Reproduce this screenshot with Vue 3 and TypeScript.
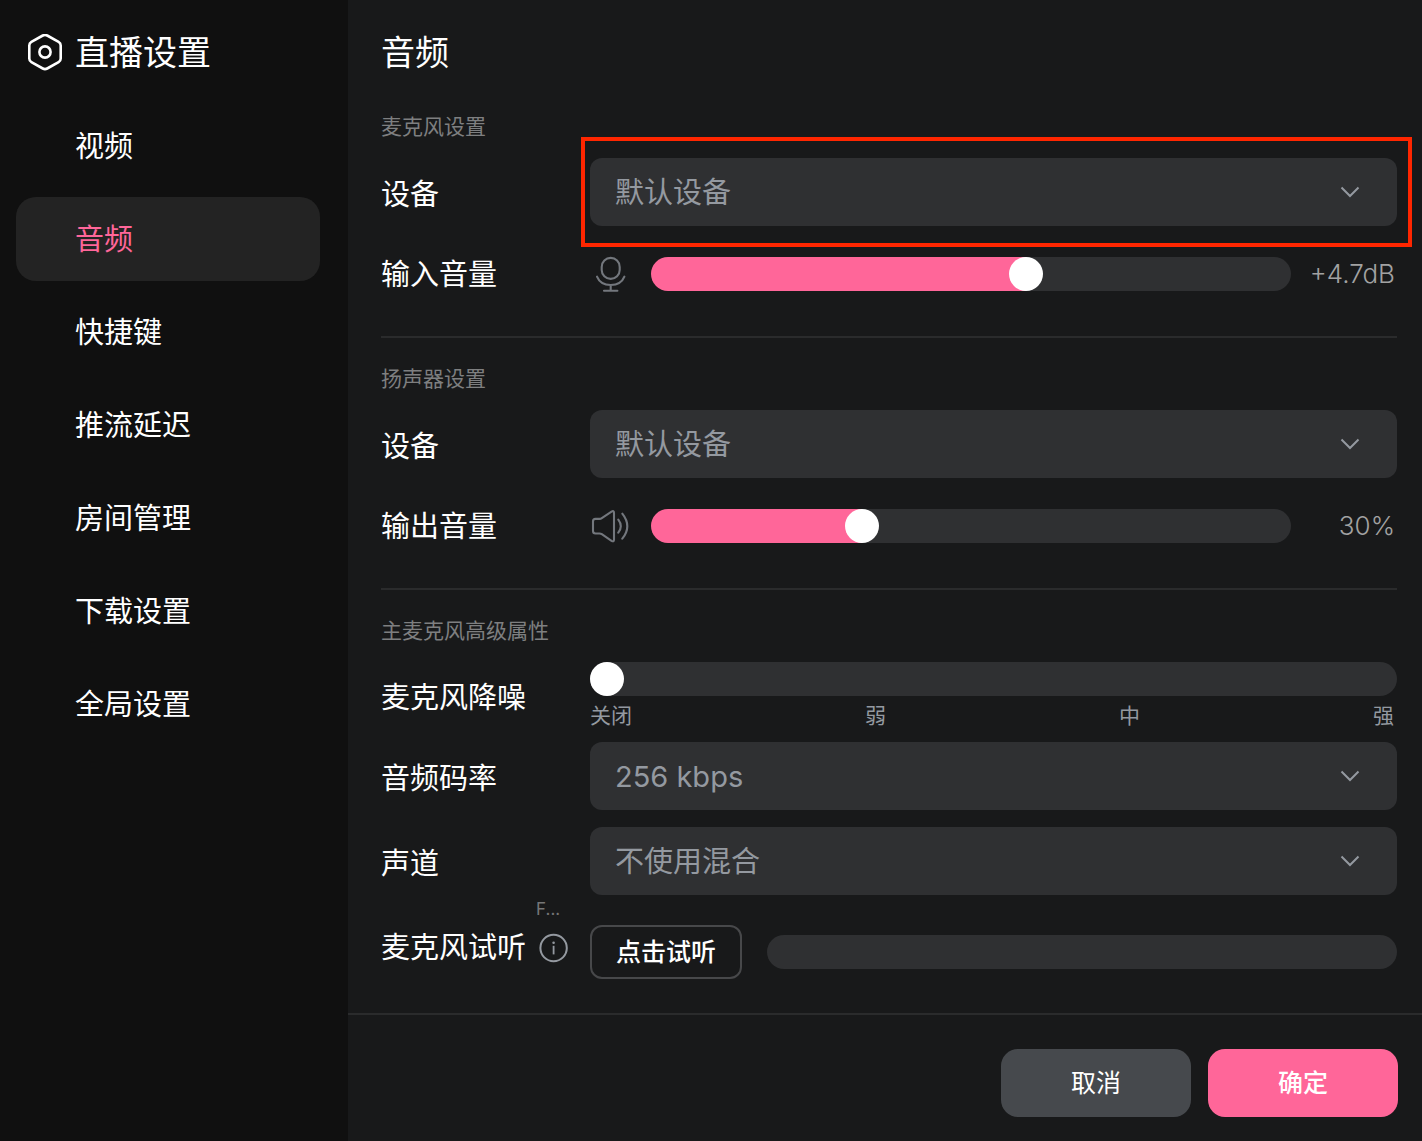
<script setup lang="ts">
import { ref } from 'vue'

interface NavItem {
  id: string
  label: string
}

const navItems: NavItem[] = [
  { id: 'video', label: '视频' },
  { id: 'audio', label: '音频' },
  { id: 'hotkey', label: '快捷键' },
  { id: 'delay', label: '推流延迟' },
  { id: 'room', label: '房间管理' },
  { id: 'download', label: '下载设置' },
  { id: 'global', label: '全局设置' },
]
const noiseLevels: string[] = ['关闭', '弱', '中', '强']

const activeId = ref('audio')
const micVolume = ref(59)
const speakerVolume = ref(32)
const noiseLevel = ref(0)
</script>

<template>
  <div class="window">
    <aside class="sidebar">
      <header class="brand">
        <svg class="brand-icon" viewBox="0 1 36 38" fill="none" stroke="#fff" stroke-width="2.6" aria-hidden="true">
          <path d="M15.8 2.5Q18 1.3 20.2 2.5L31.6 8.8Q33.7 10 33.7 12.4V25.6Q33.7 28 31.6 29.2L20.2 35.5Q18 36.7 15.8 35.5L4.4 29.2Q2.3 28 2.3 25.6V12.4Q2.3 10 4.4 8.8Z" />
          <circle cx="18" cy="19" r="5.6" />
        </svg>
        <span>直播设置</span>
      </header>
      <nav class="nav">
        <button
          v-for="item in navItems"
          :key="item.id"
          type="button"
          class="nav-item"
          :class="{ active: item.id === activeId }"
          @click="activeId = item.id"
        >
          {{ item.label }}
        </button>
      </nav>
    </aside>

    <main class="main">
      <div class="content">
        <h1>音频</h1>

        <section class="section">
          <h2>麦克风设置</h2>
          <div class="row select-row">
            <label for="mic-device">设备</label>
            <div class="select highlighted">
              <select id="mic-device"><option>默认设备</option></select>
              <svg class="chevron" viewBox="0 0 20 12" aria-hidden="true"><path d="M1.5 1.5L10 10L18.5 1.5" /></svg>
            </div>
          </div>
          <div class="row volume-row">
            <label for="mic-volume">输入音量</label>
            <div class="volume">
              <svg class="icon" viewBox="0 0 40 40" aria-hidden="true">
                <rect x="11.7" y="3.9" width="18" height="21" rx="9" />
                <path d="M7 22.7C9 27.7 14 31 20.7 31S32.4 27.7 34.4 22.7M20.7 31V36.7M14 36.7H27.4" />
              </svg>
              <input id="mic-volume" v-model.number="micVolume" class="range" type="range" min="0" max="100" :style="{ '--level': micVolume / 100 }" />
              <output for="mic-volume">+4.7dB</output>
            </div>
          </div>
        </section>

        <section class="section divided">
          <h2>扬声器设置</h2>
          <div class="row select-row">
            <label for="speaker-device">设备</label>
            <div class="select">
              <select id="speaker-device"><option>默认设备</option></select>
              <svg class="chevron" viewBox="0 0 20 12" aria-hidden="true"><path d="M1.5 1.5L10 10L18.5 1.5" /></svg>
            </div>
          </div>
          <div class="row volume-row">
            <label for="speaker-volume">输出音量</label>
            <div class="volume">
              <svg class="icon" viewBox="0 0 40 40" aria-hidden="true">
                <path d="M5.5 12.9H9.5Q10.8 12.9 11.8 12.2L21.5 5.6Q24 4.2 24 6.7V33.7Q24 36.2 21.5 34.8L11.8 28.2Q10.8 27.5 9.500 27.5H5.5Q3 27.5 3 25V15.4Q3 12.9 5.5 12.9Z" />
                <path d="M28.300 13.7Q33.3 20.2 28.3 26.7M32.3 7.700Q42.300 20.2 32.3 32.7" />
              </svg>
              <input id="speaker-volume" v-model.number="speakerVolume" class="range" type="range" min="0" max="100" :style="{ '--level': speakerVolume / 100 }" />
              <output for="speaker-volume">30%</output>
            </div>
          </div>
        </section>

        <section class="section divided">
          <h2>主麦克风高级属性</h2>
          <div class="row noise-row">
            <label for="noise">麦克风降噪</label>
            <div class="noise">
              <input id="noise" v-model.number="noiseLevel" class="range" type="range" min="0" max="3" :style="{ '--level': noiseLevel / 3 }" />
              <div class="ticks">
                <span v-for="level in noiseLevels" :key="level">{{ level }}</span>
              </div>
            </div>
          </div>
          <div class="row select-row bitrate-row">
            <label for="bitrate">音频码率</label>
            <div class="select">
              <select id="bitrate"><option>256 kbps</option></select>
              <svg class="chevron" viewBox="0 0 20 12" aria-hidden="true"><path d="M1.5 1.5L10 10L18.5 1.5" /></svg>
            </div>
          </div>
          <div class="row select-row channel-row">
            <label for="channel">声道</label>
            <div class="select">
              <select id="channel"><option>不使用混合</option></select>
              <svg class="chevron" viewBox="0 0 20 12" aria-hidden="true"><path d="M1.5 1.5L10 10L18.5 1.5" /></svg>
            </div>
          </div>
          <div class="row test-row">
            <div class="test-label">
              <span>麦克风试听</span>
              <span class="info">
                <span class="info-hint">F...</span>
                <svg viewBox="0 0 30 30" aria-hidden="true">
                  <circle cx="14.6" cy="15" r="13.2" fill="none" stroke="#9499a0" stroke-width="2" />
                  <path d="M14.6 12.8V21.4" stroke="#9499a0" stroke-width="1.8" />
                  <circle cx="14.6" cy="9.8" r="1.3" fill="#9499a0" />
                </svg>
              </span>
            </div>
            <div class="test">
              <button type="button" class="test-button">点击试听</button>
              <div class="meter"></div>
            </div>
          </div>
        </section>
      </div>

      <footer class="footer">
        <button type="button" class="action cancel">取消</button>
        <button type="button" class="action confirm">确定</button>
      </footer>
    </main>
  </div>
</template>

<style>
body {
  margin: 0;
  background: #18191a;
}
</style>

<style scoped>
.window {
  display: flex;
  min-height: 100vh;
  color: #fff;
  background: #18191a;
  font-family: Inter, "Noto Sans CJK SC", sans-serif;
  font-size: 29px;
  line-height: 46px;
}

button,
select {
  font: inherit;
  color: inherit;
  border: 0;
  margin: 0;
  cursor: pointer;
}

.sidebar {
  flex: 0 0 348px;
  box-sizing: border-box;
  padding: 29px 28px 0 16px;
  background: #101010;
}

.brand {
  display: flex;
  align-items: center;
  gap: 12px;
  padding-left: 11px;
  font-size: 34px;
  line-height: 48px;
}

.brand-icon {
  width: 36px;
  height: 38px;
}

.nav {
  display: flex;
  flex-direction: column;
  gap: 9px;
  margin-top: 27px;
}

.nav-item {
  height: 84px;
  padding: 2px 0 0 59px;
  border-radius: 20px;
  background: transparent;
  text-align: left;
}

.nav-item.active {
  background: #232323;
  color: #ff6699;
}

.main {
  flex: 1;
  min-width: 0;
  display: flex;
  flex-direction: column;
}

.content {
  padding: 29px 25px 34px 33px;
}

h1 {
  margin: 0 0 34px;
  font-size: 34px;
  line-height: 48px;
  font-weight: 400;
}

h2 {
  margin: 0 0 15px;
  font-size: 21px;
  line-height: 32px;
  font-weight: 400;
  color: #7e7f80;
}

.section.divided {
  margin-top: 45px;
  padding-top: 25px;
  border-top: 2px solid #2a2b2c;
}

.row {
  display: grid;
  grid-template-columns: 209px minmax(0, 1fr);
  align-items: center;
}

.row label {
  padding-top: 2px;
}

.row.select-row label {
  padding-top: 6px;
}

.volume-row {
  margin-top: 31px;
}

.volume-row label {
  line-height: 32px;
}

.select {
  position: relative;
}

.select select {
  display: block;
  width: 100%;
  height: 68px;
  padding: 2px 60px 0 25px;
  border-radius: 12px;
  appearance: none;
  background: #2f3032;
  color: #9499a0;
}

.chevron {
  position: absolute;
  top: 28px;
  right: 37px;
  width: 20px;
  height: 12px;
  fill: none;
  stroke: #9499a0;
  stroke-width: 2;
  pointer-events: none;
}

.highlighted::after {
  content: "";
  position: absolute;
  inset: -21px -15px -21px -9px;
  border: 4px solid #ff2600;
  pointer-events: none;
}

.volume {
  display: flex;
  align-items: center;
  height: 34px;
}

.icon {
  flex: none;
  width: 40px;
  height: 40px;
  margin-right: 21px;
  fill: none;
  stroke: #73777d;
  stroke-width: 2.1;
  stroke-linecap: round;
}

.volume output {
  flex: 0 0 106px;
  box-sizing: border-box;
  padding-right: 2px;
  text-align: right;
  font-size: 26px;
  font-weight: 300;
  color: #a2a2a2;
}

.range {
  display: block;
  flex: 1;
  width: 100%;
  min-width: 0;
  height: 34px;
  margin: 0;
  border-radius: 17px;
  appearance: none;
  background: linear-gradient(#ff6699, #ff6699) no-repeat #2f3032;
  background-size: calc((100% - 34px) * var(--level) + 17px * min(1, var(--level) * 100)) 100%;
  cursor: pointer;
}

.range::-webkit-slider-thumb {
  appearance: none;
  width: 34px;
  height: 34px;
  border-radius: 50%;
  background: #fff;
}

.ticks {
  display: flex;
  justify-content: space-between;
  margin-top: 5px;
  padding-right: 3px;
  font-size: 21px;
  line-height: 30px;
  color: #9499a0;
}

.bitrate-row {
  margin-top: 11px;
}

.channel-row {
  margin-top: 17px;
}

.test-row {
  margin-top: 30px;
}

.test-label {
  display: flex;
  align-items: center;
  align-self: start;
  gap: 13px;
}

.info {
  position: relative;
  width: 30px;
  height: 30px;
}

.info svg {
  display: block;
}

.info-hint {
  position: absolute;
  bottom: 100%;
  left: -3px;
  padding-bottom: 12px;
  font-size: 17px;
  line-height: 24px;
  color: #757677;
}

.test {
  display: flex;
  align-items: center;
  gap: 25px;
}

.test-button {
  height: 54px;
  padding: 0 24px;
  border: 2px solid #47484a;
  border-radius: 12px;
  background: transparent;
  font-size: 25px;
  font-weight: 500;
}

.meter {
  flex: 1;
  height: 34px;
  border-radius: 17px;
  background: #2f3032;
}

.footer {
  display: flex;
  justify-content: flex-end;
  gap: 17px;
  padding: 34px 24px 24px;
  border-top: 2px solid #2a2b2c;
}

.action {
  width: 190px;
  height: 68px;
  border-radius: 17px;
  font-size: 25px;
}

.cancel {
  background: #46494d;
}

.confirm {
  background: #ff6699;
  font-weight: 500;
}
</style>
